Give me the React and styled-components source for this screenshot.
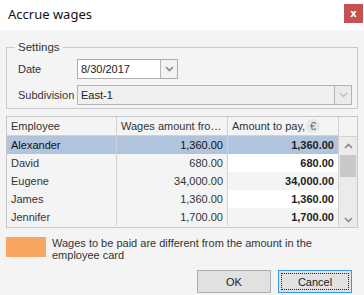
import React from 'react';
import styled, { createGlobalStyle } from 'styled-components';

const Global = createGlobalStyle`
  html, body { margin: 0; padding: 0; }
  body {
    width: 364px;
    height: 295px;
    overflow: hidden;
    background: #f4f4f4;
    font-family: 'Liberation Sans', Arial, sans-serif;
    font-size: 11px;
    color: #333;
  }
`;

const Window = styled.div`
  width: 364px;
  height: 295px;
  display: flex;
  flex-direction: column;
  background: #f4f4f4;
`;

const TitleBar = styled.div`
  height: 30px;
  background: #ffffff;
  display: flex;
  align-items: center;
  justify-content: space-between;
  padding-left: 8px;
  box-sizing: border-box;
`;

const Title = styled.div`
  font-family: 'Noto Sans', 'Open Sans', sans-serif;
  font-size: 13px;
  color: #111;
  margin-top: -2px;
`;

const CloseBtn = styled.div`
  width: 19px;
  height: 19px;
  margin-top: -3px;
  margin-right: 1px;
  background: #c75050;
  color: #fff;
  font-family: 'DejaVu Sans', sans-serif;
  font-weight: bold;
  font-size: 10px;
  display: flex;
  align-items: center;
  justify-content: center;
`;

const Body = styled.div`
  padding: 10px 6px 0 6px;
  display: flex;
  flex-direction: column;
`;

const Group = styled.fieldset`
  margin: 0;
  border: 1px solid #cbcbcb;
  padding: 5px 5px 3px 11px;
  display: flex;
  flex-direction: column;
  gap: 6px;
`;

const Legend = styled.legend`
  padding: 0 3px;
  margin-left: -3px;
  font-size: 11.5px;
  line-height: 14px;
  color: #333;
`;

const FieldRow = styled.div`
  display: flex;
  align-items: center;
  height: 20px;
`;

const Label = styled.div`
  width: 59px;
  flex: none;
  color: #333;
`;

const Combo = styled.div`
  width: ${p => p.$w}px;
  height: 20px;
  box-sizing: border-box;
  border: 1px solid ${p => (p.$disabled ? '#b4b4b4' : '#acacac')};
  background: ${p => (p.$disabled ? '#f0f0f0' : '#ffffff')};
  display: flex;
  align-items: stretch;
`;

const ComboText = styled.div`
  flex: 1;
  padding-left: 3px;
  display: flex;
  align-items: center;
  color: #222;
`;

const ComboBtn = styled.div`
  width: 16px;
  border-left: 1px solid #b4b4b4;
  background: ${p => (p.$disabled ? '#ebebeb' : '#f2f2f2')};
  display: flex;
  align-items: center;
  justify-content: center;
`;

const Chevron = ({ up, color = '#8a8a8a' }) => (
  <svg width="9" height="6" viewBox="0 0 9 6">
    <path
      d={up ? 'M1 5 L4.5 1.5 L8 5' : 'M1 1 L4.5 4.5 L8 1'}
      fill="none"
      stroke={color}
      strokeWidth="1.6"
    />
  </svg>
);

const Grid = styled.div`
  margin-top: 7px;
  border: 1px solid #c8c8c8;
  display: flex;
  height: 112px;
  box-sizing: border-box;
`;

const Table = styled.div`
  display: grid;
  grid-template-columns: 110px 111px 111px;
  grid-auto-rows: 18px;
  grid-template-rows: 19px;
`;

const HeadCell = styled.div`
  border-right: 1px solid #d2d2d2;
  border-bottom: 1px solid #d2d2d2;
  padding-left: 4px;
  display: flex;
  align-items: center;
  white-space: nowrap;
  overflow: hidden;
  color: #333;
`;

const Cell = styled.div`
  border-right: 1px solid #d2d2d2;
  padding: 0 4px;
  display: flex;
  align-items: center;
  justify-content: ${p => (p.$right ? 'flex-end' : 'flex-start')};
  font-weight: ${p => (p.$bold ? 'bold' : 'normal')};
  color: ${p => (p.$bold ? '#1e1e1e' : '#333')};
  background: ${p => p.$bg};
  white-space: nowrap;
`;

const Euro = styled.span`
  display: inline-flex;
  align-items: center;
  justify-content: center;
  width: 14px;
  height: 14px;
  border-radius: 7px;
  background: #e6e6e6;
  color: #666;
  margin-left: 1px;
`;

const Scroll = styled.div`
  flex: 1;
  display: flex;
  flex-direction: column;
`;

const ScrollHead = styled.div`
  height: 19px;
  border-bottom: 1px solid #d2d2d2;
  flex: none;
`;

const Track = styled.div`
  flex: 1;
  background: #ebebeb;
  display: flex;
  flex-direction: column;
`;

const Arrow = styled.div`
  height: 18px;
  display: flex;
  align-items: center;
  justify-content: center;
`;

const Thumb = styled.div`
  height: 22px;
  margin: 0 1px;
  background: #c8c8c8;
`;

const Note = styled.div`
  margin-top: 9px;
  display: flex;
  gap: 6px;
`;

const Swatch = styled.div`
  width: 40px;
  height: 20px;
  background: #f7a661;
  flex: none;
`;

const NoteText = styled.div`
  line-height: 12px;
  margin-top: 0px;
  color: #333;
  width: 270px;
`;

const Buttons = styled.div`
  margin-top: 9px;
  display: flex;
  justify-content: flex-end;
  gap: 7px;
  padding-right: 6px;
`;

const Button = styled.div`
  width: 74px;
  height: 23px;
  box-sizing: border-box;
  border: 1px solid ${p => (p.$focus ? '#3c96ee' : '#adadad')};
  background: #e1e1e1;
  display: flex;
  align-items: center;
  justify-content: center;
  padding: 2px;
  color: #222;
`;

const Focus = styled.div`
  flex: 1;
  align-self: stretch;
  border: 1px dotted ${p => (p.$on ? '#222' : 'transparent')};
  display: flex;
  align-items: center;
  justify-content: center;
`;

const rows = [
  { name: 'Alexander', wages: '1,360.00', pay: '1,360.00' },
  { name: 'David', wages: '680.00', pay: '680.00' },
  { name: 'Eugene', wages: '34,000.00', pay: '34,000.00' },
  { name: 'James', wages: '1,360.00', pay: '1,360.00' },
  { name: 'Jennifer', wages: '1,700.00', pay: '1,700.00' },
];

export default function App() {
  return (
    <Window>
      <Global />
      <TitleBar>
        <Title>Accrue wages</Title>
        <CloseBtn>x</CloseBtn>
      </TitleBar>
      <Body>
        <Group>
          <Legend>Settings</Legend>
          <FieldRow>
            <Label>Date</Label>
            <Combo $w={101}>
              <ComboText>8/30/2017</ComboText>
              <ComboBtn>
                <Chevron />
              </ComboBtn>
            </Combo>
          </FieldRow>
          <FieldRow>
            <Label>Subdivision</Label>
            <Combo $w={275} $disabled>
              <ComboText>East-1</ComboText>
              <ComboBtn $disabled>
                <Chevron color="#c4c4c4" />
              </ComboBtn>
            </Combo>
          </FieldRow>
        </Group>
        <Grid>
          <Table>
            <HeadCell>Employee</HeadCell>
            <HeadCell>Wages amount fro…</HeadCell>
            <HeadCell>
              Amount to pay,<Euro>€</Euro>
            </HeadCell>
            {rows.map((r, i) => {
              const sel = i === 0;
              const base = sel ? '#b1c4de' : 'transparent';
              const payBg = sel ? '#b1c4de' : i % 2 === 1 ? '#ffffff' : '#f4f4f4';
              return (
                <React.Fragment key={r.name}>
                  <Cell $bg={base} style={{ color: sel ? '#111' : undefined }}>{r.name}</Cell>
                  <Cell $bg={base} $right style={{ color: sel ? '#111' : undefined }}>{r.wages}</Cell>
                  <Cell $bg={payBg} $right $bold>{r.pay}</Cell>
                </React.Fragment>
              );
            })}
          </Table>
          <Scroll>
            <ScrollHead />
            <Track>
              <Arrow>
                <Chevron up />
              </Arrow>
              <Thumb />
              <div style={{ flex: 1 }} />
              <Arrow style={{ height: 14 }}>
                <Chevron />
              </Arrow>
            </Track>
          </Scroll>
        </Grid>
        <Note>
          <Swatch />
          <NoteText>Wages to be paid are different from the amount in the employee card</NoteText>
        </Note>
        <Buttons>
          <Button>
            <Focus>OK</Focus>
          </Button>
          <Button $focus>
            <Focus $on>Cancel</Focus>
          </Button>
        </Buttons>
      </Body>
    </Window>
  );
}
